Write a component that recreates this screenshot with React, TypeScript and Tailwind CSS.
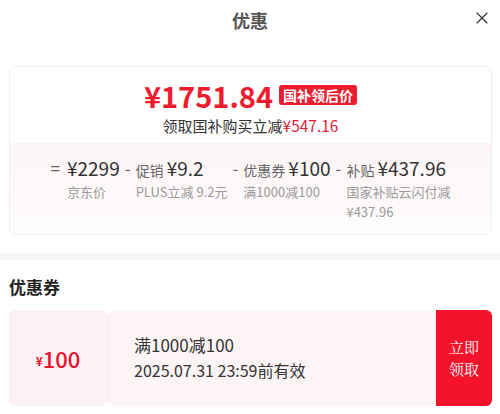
import { X } from "lucide-react";

const font = { fontFamily: '"Noto Sans CJK SC", "Noto Sans", sans-serif' };

const parts = [
  { op: "=", tag: "", amount: "¥2299", note: "京东价" },
  { op: "-", tag: "促销", amount: "¥9.2", note: "PLUS立减 9.2元" },
  { op: "-", tag: "优惠券", amount: "¥100", note: "满1000减100" },
  { op: "-", tag: "补贴", amount: "¥437.96", note: "国家补贴云闪付减 ¥437.96" },
];

export default function App() {
  return (
    <div className="h-[414px] w-[500px] overflow-hidden bg-white text-[#333]" style={font}>
      <header className="relative flex h-[40px] items-center justify-center">
        <h1 className="text-[18px] font-bold text-[#555]">优惠</h1>
        <X className="absolute right-[8px] top-[8px] h-[20px] w-[20px] text-[#333]" strokeWidth={1.4} />
      </header>

      <section className="mx-[9px] mt-[26px] w-[483px] overflow-hidden rounded-[7px] border border-[#eeeeee]">
        <div className="flex h-[76px] flex-col items-center pt-[13px]">
          <div className="flex h-[30px] items-center gap-[6px]">
            <span className="text-[29px] font-bold leading-[30px] text-[#ef1c30]">¥1751.84</span>
            <span className="rounded-[3px] bg-[#ef1c30] px-[4px] text-[14px] font-bold leading-[20px] text-white">国补领后价</span>
          </div>
          <p className="mt-[4px] text-[15px] leading-[22px]">
            领取国补购买立减<span className="text-[15.5px] text-[#e31d36]">¥547.16</span>
          </p>
        </div>
        <div className="flex h-[91px] justify-center bg-gradient-to-b from-[#fdf5f5] to-[#fefcfc] pt-[11px]">
          {parts.map((p, i) => (
            <div key={i} className={`flex items-start ${i === 0 ? "" : "ml-[5px]"}`}>
              <span className={`text-[17px] leading-[28px] text-[#666] ${i === 0 ? "mr-[7px]" : "mr-[5px]"}`}>{p.op}</span>
              <div className={i === 3 ? "w-[104px]" : ""}>
                <div className="flex items-baseline gap-[3px] whitespace-nowrap">
                  {p.tag && <span className="text-[14px] text-[#666]">{p.tag}</span>}
                  <span className="text-[19px] leading-[28px] text-[#333]">{p.amount}</span>
                </div>
                <div className={`text-[13px] leading-[20px] text-[#999] ${i === 3 ? "" : "whitespace-nowrap"}`}>{p.note}</div>
              </div>
            </div>
          ))}
        </div>
      </section>

      <div className="mt-[18px] h-[7px] bg-[#f5f6fa]" />

      <h2 className="ml-[9px] mt-[15px] text-[17px] font-bold leading-[24px] text-[#222]">优惠券</h2>

      <div className="mx-[9px] mt-[11px] flex h-[96px] w-[483px]">
        <div className="flex w-[98px] items-center justify-center rounded-l-[6px] bg-[#fdf2f3] text-[#e8142c]">
          <span className="mt-[5px] text-[12px] font-bold">¥</span>
          <span className="text-[22px] font-medium leading-none">100</span>
        </div>
        <div className="relative w-[3px] bg-[#fdf2f3]">
          <span className="absolute -top-[4px] left-[-3px] h-[8px] w-[8px] rounded-full bg-white" />
          <span className="absolute bottom-[-4px] left-[-3px] h-[8px] w-[8px] rounded-full bg-white" />
          <span className="absolute bottom-[6px] left-[1px] top-[6px] border-l border-dashed border-[#f6e6e8]" />
        </div>
        <div className="flex flex-1 flex-col justify-center bg-[#fdf5f5] pb-[2px] pl-[24px]">
          <div className="text-[17px] leading-[26px] text-[#333]">满1000减100</div>
          <div className="text-[16px] leading-[24px] text-[#333]">2025.07.31 23:59前有效</div>
        </div>
        <button
          type="button"
          className="flex w-[56px] items-center justify-center rounded-r-[6px] bg-[#f5132c] text-[15px] leading-[22px] text-white"
          style={{ fontFamily: '"Noto Serif CJK SC", "Liberation Serif", serif' }}
        >
          立即
          <br />
          领取
        </button>
      </div>
    </div>
  );
}
